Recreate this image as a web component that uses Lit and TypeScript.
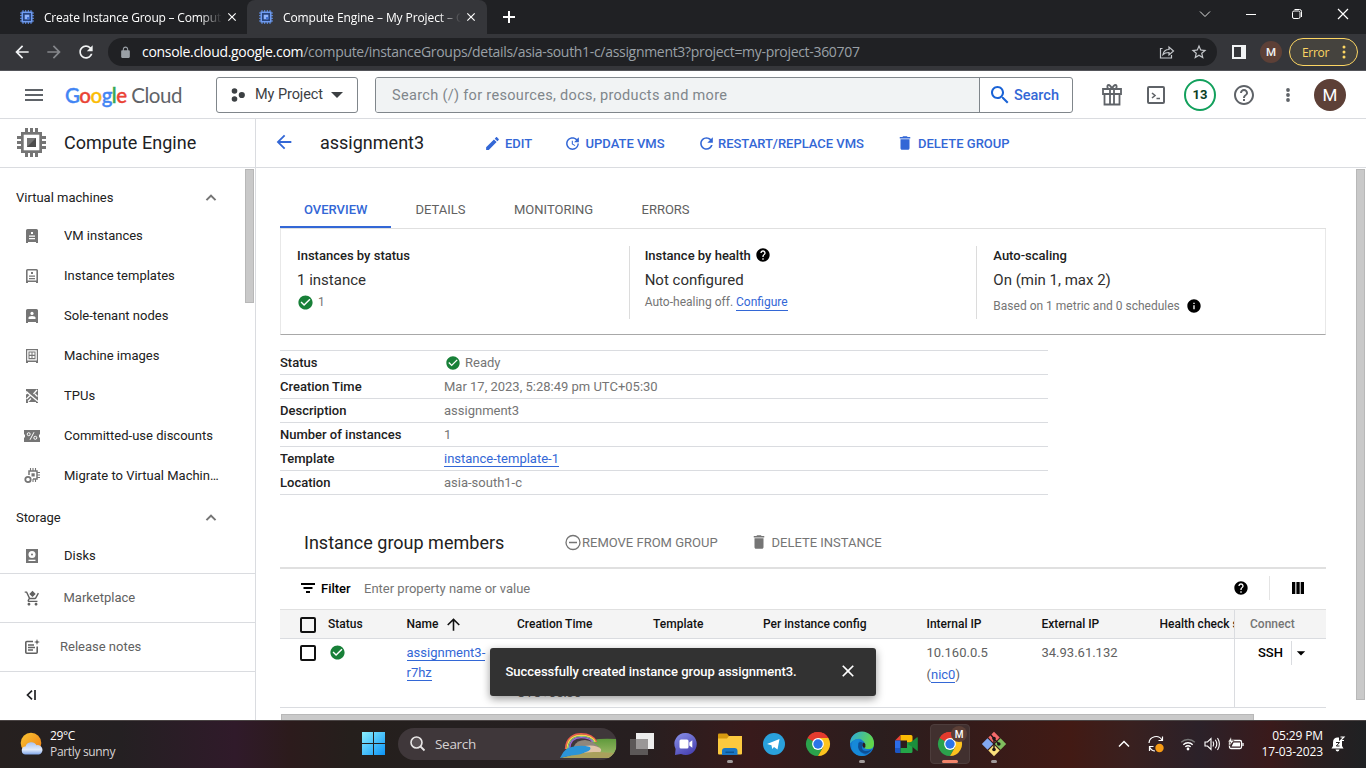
import { LitElement, html, css } from "lit";
import { customElement } from "lit/decorators.js";

const P = {
  edit: "M3 17.25V21h3.75L17.81 9.94l-3.75-3.75L3 17.25zM20.71 7.04c.39-.39.39-1.02 0-1.41l-2.34-2.34c-.39-.39-1.02-.39-1.41 0l-1.83 1.83 3.75 3.75 1.83-1.83z",
  refresh: "M17.65 6.35C16.2 4.9 14.21 4 12 4c-4.42 0-7.99 3.58-7.99 8s3.57 8 7.99 8c3.73 0 6.84-2.55 7.73-6h-2.08c-.82 2.33-3.04 4-5.65 4-3.31 0-6-2.69-6-6s2.69-6 6-6c1.66 0 3.14.69 4.22 1.78L13 11h7V4l-2.35 2.35z",
  update: "M21 10.12h-6.78l2.74-2.82c-2.73-2.7-7.15-2.8-9.88-.1-2.73 2.71-2.73 7.08 0 9.79s7.15 2.71 9.88 0C18.32 15.65 19 14.08 19 12.1h2c0 1.98-.88 4.55-2.64 6.29-3.51 3.48-9.21 3.48-12.72 0-3.5-3.47-3.53-9.11-.02-12.58s9.14-3.47 12.65 0L21 3v7.12zM12.5 8v4.25l3.5 2.08-.72 1.21L11 13V8h1.5z",
  del: "M6 19c0 1.1.9 2 2 2h8c1.1 0 2-.9 2-2V7H6v12zM19 4h-3.5l-1-1h-5l-1 1H5v2h14V4z",
  help: "M12 2C6.48 2 2 6.48 2 12s4.48 10 10 10 10-4.48 10-10S17.52 2 12 2zm1 17h-2v-2h2v2zm2.07-7.75l-.9.92C13.45 12.9 13 13.5 13 15h-2v-.5c0-1.1.45-2.1 1.17-2.83l1.24-1.26c.37-.36.59-.86.59-1.41 0-1.1-.9-2-2-2s-2 .9-2 2H8c0-2.21 1.79-4 4-4s4 1.79 4 4c0 .88-.36 1.68-.93 2.25z",
  helpOutline: "M11 18h2v-2h-2v2zm1-16C6.48 2 2 6.48 2 12s4.48 10 10 10 10-4.48 10-10S17.52 2 12 2zm0 18c-4.41 0-8-3.59-8-8s3.59-8 8-8 8 3.59 8 8-3.59 8-8 8zm0-14c-2.21 0-4 1.79-4 4h2c0-1.1.9-2 2-2s2 .9 2 2c0 2-3 1.75-3 5h2c0-2.25 3-2.5 3-5 0-2.21-1.79-4-4-4z",
  search: "M15.5 14h-.79l-.28-.27C15.41 12.59 16 11.11 16 9.5 16 5.91 13.09 3 9.5 3S3 5.91 3 9.5 5.91 16 9.5 16c1.61 0 3.09-.59 4.23-1.57l.27.28v.79l5 4.99L20.49 19l-4.99-5zm-6 0C7.01 14 5 11.99 5 9.5S7.01 5 9.5 5 14 7.01 14 9.5 11.99 14 9.5 14z",
  check: "M12 2C6.48 2 2 6.48 2 12s4.48 10 10 10 10-4.48 10-10S17.52 2 12 2zm-2 15l-5-5 1.41-1.41L10 14.17l7.59-7.59L19 8l-9 9z",
  info: "M12 2C6.48 2 2 6.48 2 12s4.48 10 10 10 10-4.48 10-10S17.52 2 12 2zm1 15h-2v-6h2v6zm0-8h-2V7h2v2z",
  star: "M22 9.24l-7.19-.62L12 2 9.19 8.63 2 9.24l5.46 4.73L5.82 21 12 17.27 18.18 21l-1.63-7.03L22 9.24zM12 15.4l-3.76 2.27 1-4.28-3.32-2.88 4.38-.38L12 6.1l1.71 4.04 4.38.38-3.32 2.88 1 4.28L12 15.4z",
  lock: "M18 8h-1V6c0-2.76-2.24-5-5-5S7 3.24 7 6v2H6c-1.1 0-2 .9-2 2v10c0 1.1.9 2 2 2h12c1.1 0 2-.9 2-2V10c0-1.1-.9-2-2-2zM9 6c0-1.66 1.34-3 3-3s3 1.34 3 3v2H9z",
  up: "M12 7.500l-6.300 6.200L7.400 15.400 12 10.900l4.600 4.500 1.700-1.700z",
  back: "M20 11H7.83l5.59-5.59L12 4l-8 8 8 8 1.41-1.41L7.83 13H20v-2z",
  forward: "M12 4l-1.41 1.41L16.17 11H4v2h12.17l-5.58 5.59L12 20l8-8z",
  arrowUp: "M4 12l1.41 1.41L11 7.83V20h2V7.83l5.58 5.59L20 12l-8-8-8 8z",
  close: "M19 6.41L17.59 5 12 10.59 6.41 5 5 6.41 10.59 12 5 17.59 6.41 19 12 13.41 17.59 19 19 17.59 13.41 12z",
  drop: "M7 10l5 5 5-5z",
  cart: "M7 18c-1.1 0-1.99.9-1.99 2S5.9 22 7 22s2-.9 2-2-.9-2-2-2zm10 0c-1.1 0-1.99.9-1.99 2s.89 2 1.99 2 2-.9 2-2-.9-2-2-2zm-9.83-3.25l.03-.12.9-1.63h7.45c.75 0 1.41-.41 1.75-1.03l3.86-7.01L19.42 4h-.01l-1.1 2-2.76 5H8.53l-.13-.27L6.16 6l-.95-2-.94-2H1v2h2l3.6 7.59-1.35 2.45c-.16.28-.25.61-.25.96 0 1.1.9 2 2 2h12v-2H7.42c-.13 0-.25-.11-.25-.25zM12 1l4.5 4.5L12 10 7.5 5.5z",
};

const mi = (d: string, size: number, cls = "") =>
  html`<svg class=${cls} width=${size} height=${size} viewBox="0 0 24 24"><path d=${d}></path></svg>`;

const favicon = html`<svg width="16" height="16" viewBox="0 0 16 16">
  <path d="M4 1v14M6.7 1v14M9.3 1v14M12 1v14M1 4h14M1 6.700h14M1 9.300h14M1 12h14" stroke="#5f8fe8" stroke-width="1"></path>
  <rect x="2.500" y="2.500" width="11" height="11" fill="#6f9bf0"></rect>
  <rect x="4" y="4" width="8" height="8" fill="#26437c"></rect>
  <rect x="5.7" y="5.7" width="4.6" height="4.6" fill="#8fb3fa"></rect><path d="M8 8h2.3v2.3H8z" fill="#4172d6"></path></svg>`;

const chip = html`<svg width="29" height="29" viewBox="0 0 29 29">
  <path d="M9.5 0v29M14.5 0v29M19.5 0v29M0 9.5h29M0 14.5h29M0 19.5h29" stroke="#757575" stroke-width="3"></path>
  <rect x="4" y="4" width="21" height="21" fill="#757575"></rect>
  <rect x="6.7" y="6.7" width="15.6" height="15.6" fill="#fff"></rect>
  <rect x="10" y="10" width="9" height="9" fill="#757575"></rect><path d="M19 10v9h-9z" fill="#4d4d4d"></path></svg>`;

const navIcons = {
  vm: html`<svg width="16" height="16" viewBox="0 0 16 16"><path d="M2 2.5Q2 1 3.5 1h9Q14 1 14 2.5V15h-2v-1H4v1H2zM7 4v2h2V4zM5 7.5v1.2h6V7.5zM5 10v1.2h6V10z" fill-rule="evenodd"></path></svg>`,
  tpl: html`<svg width="16" height="16" viewBox="0 0 16 16"><path d="M2 2.5Q2 1 3.5 1h9Q14 1 14 2.5V15h-2v-1H4v1H2zM3.6 2.6v9.8h8.8V2.6zM7 4h2v2H7zM5 7.5h6v1.2H5zM5 10h6v1.2H5z" fill-rule="evenodd"></path></svg>`,
  sole: html`<svg width="16" height="16" viewBox="0 0 16 16"><path d="M2 2.5Q2 1 3.5 1h9Q14 1 14 2.5V15h-2v-1H4v1H2z"></path><circle cx="8" cy="5.4" r="1.6" fill="#fff"></circle><path d="M4.5 11V9.8Q4.5 8 8 8t3.5 1.8V11z" fill="#fff"></path></svg>`,
  img: html`<svg width="16" height="16" viewBox="0 0 16 16"><path d="M2 1h12v14h-2v-1H4v1H2zM3.2 2.3v10.2h9.6V2.3zM4.5 3.5h7v7.8h-7zM5.5 4.6v2.2h2V4.6zm3 0v2.2h2V4.6zm-3 3.3v2.2h2V7.9zm3 0v2.2h2V7.9z" fill-rule="evenodd"></path></svg>`,
  tpu: html`<svg width="16" height="16" viewBox="0 0 16 16"><path d="M2 1h12v14h-2v-1H4v1H2z"></path><path d="M2 3.5l12 10M13 2L9.5 6M2.5 11l4-4M4 13.5l3-3M2 6l2-2M11 6l2.5 2.5" stroke="#fff" stroke-width="1.3"></path></svg>`,
  disc: html`<svg width="16" height="16" viewBox="0 0 16 16"><path d="M0 2h16v4.5h-1v3h1V14H0V9.500h1v-3H0z"></path><path d="M10 4.2L6 11.8" stroke="#fff" stroke-width="1"></path><circle cx="4.7" cy="6.2" r="1.5" fill="none" stroke="#fff"></circle><circle cx="11.3" cy="9.8" r="1.5" fill="none" stroke="#fff"></circle></svg>`,
  mig: html`<svg width="16" height="16" viewBox="0 0 16 16"><path d="M6.5 0v3M9 0v3M11.5 0v3M13 4.5h3M13 7h3M13 9.5h3M9 11v3M11.5 11v3" stroke="#757575" stroke-width="1.1"></path><path d="M5 7V3h8v8h-4" fill="none" stroke="#757575" stroke-width="1.5"></path><rect x="7.5" y="5.3" width="3.2" height="3.2"></rect><circle cx="4" cy="11.5" r="2.7" fill="none" stroke="#757575" stroke-width="1.8"></circle></svg>`,
  disk: html`<svg width="16" height="16" viewBox="0 0 16 16"><path d="M2 1h12v14H2z"></path><circle cx="8" cy="6.6" r="3.5" fill="#fff"></circle><circle cx="8" cy="6.6" r="1"></circle><path d="M4.5 11.7h7v1.3h-7z" fill="#fff"></path></svg>`,
  notes: html`<svg width="16" height="16" viewBox="0 0 16 16"><path d="M9 2.5H2.8Q1.8 2.5 1.8 3.5v9.7q0 1 1 1h9.4q1 0 1-1V7.5" fill="none" stroke="#616161" stroke-width="1.6"></path><path d="M4 6h6M4 8.5h7M4 11h5" stroke="#616161" stroke-width="1.4"></path><path d="M13 0l.8 2.2L16 3l-2.2.8L13 6l-.8-2.2L10 3l2.2-.8z" fill="#616161"></path></svg>`,
};

const weather = html`<svg width="24" height="24" viewBox="0 0 24 24"><defs><linearGradient id="sun" x2="1" y2="1"><stop stop-color="#f9c532"></stop><stop offset="1" stop-color="#ee7d16"></stop></linearGradient><linearGradient id="cl" x2="0" y2="1"><stop stop-color="#a9c3f2"></stop><stop offset=".6" stop-color="#e1ebfb"></stop><stop offset="1" stop-color="#7fa5e8"></stop></linearGradient></defs>
  <circle cx="11" cy="11" r="10.3" fill="url(#sun)"></circle><path d="M6 22.5a4 4 0 0 1-.5-8 6 6 0 0 1 11-1.2 4.7 4.7 0 0 1 2.5 9.2z" fill="url(#cl)"></path></svg>`;
const winLogo = html`<svg width="23" height="23" viewBox="0 0 23 23"><defs><linearGradient id="wn" x2="1" y2="1"><stop stop-color="#8af0ff"></stop><stop offset="1" stop-color="#0c93f5"></stop></linearGradient></defs><path d="M0 0h11v11H0zM12 0h11v11H12zM0 12h11v11H0zM12 12h11v11H12z" fill="url(#wn)"></path></svg>`;
const rainbow = html`<svg class="scene" width="56" height="25" viewBox="0 0 56 25"><defs><linearGradient id="gr" x2="0" y2="1"><stop stop-color="#5f9a3c"></stop><stop offset="1" stop-color="#a6bd6c"></stop></linearGradient></defs>
  <path d="M32 7q10-2 24-1v10q-2 6-7 9H22l6-12z" fill="url(#gr)"></path><path d="M14 13q3-6 11-6 8 1 14 7l-3 4H15z" fill="#8f877c"></path>
  <path d="M5.500 16C6 4.500 14 .800 21 .800S34 3.500 36.500 9" fill="none" stroke="#ee5a4f" stroke-width="1.400"></path><path d="M6.900 16C7.400 5.500 14.500 2.200 21 2.200S33 4.500 35.200 9" fill="none" stroke="#fbd44b" stroke-width="1.400"></path><path d="M8.200 16C8.700 6.500 15 3.500 21 3.500S32 5.500 34 9" fill="none" stroke="#7bc98a" stroke-width="1.200"></path><path d="M9.500 16C10 7.500 15.500 4.700 21 4.700S31 6.500 32.700 9" fill="none" stroke="#9a62d8" stroke-width="1.300"></path>
  <path d="M24 13q12-2 17 3 1 4-5 5l-12-1z" fill="#e0c4a8"></path><path d="M0 25q22-7 38-6l16 1-5 5z" fill="#a9a05c"></path><path d="M0 25q4-8 8-10 12-4 22-1 2 3-4 5-6 3-15 3.500z" fill="#2b95d8"></path></svg>`;
const taskView = html`<svg width="24" height="22" viewBox="0 0 24 22"><rect x="6" width="18" height="16" fill="#ededed"></rect><rect y="6" width="18" height="16" fill="#5c5858"></rect><path d="M6 6h12v10H6z" fill="#9a9797"></path></svg>`;
const chat = html`<svg width="24" height="24" viewBox="0 0 24 24"><defs><linearGradient id="ch" x2="0.6" y2="1"><stop stop-color="#8b93ea"></stop><stop offset="1" stop-color="#4b45b4"></stop></linearGradient></defs><path d="M12 1a11 11 0 1 1-5 20.9L1 23l.6-6A11 11 0 0 1 12 1z" fill="url(#ch)"></path><rect x="5.5" y="7.5" width="9" height="9" rx="1.5" fill="#fff"></rect><path d="M15.3 10.5l3-2.3v7.6l-3-2.3z" fill="#fff"></path></svg>`;
const folder = html`<svg width="24" height="22" viewBox="0 0 24 22"><path d="M0 1.5Q0 .5 1 .5h8l2 2.5v6H0z" fill="#d79a10"></path><path d="M0 5.5h9l2-2.5h13v17.5q0 1-1 1H1q-1 0-1-1z" fill="#fcc93f"></path><path d="M4 22v-4q0-3 3-3h9.5q3 0 3 3v4z" fill="#1a76c4"></path><path d="M7.5 18.5h8.5v1.5H7.5z" fill="#0d5390"></path></svg>`;
const telegram = html`<svg width="22" height="22" viewBox="0 0 22 22"><circle cx="11" cy="11" r="11" fill="#2aa1dc"></circle><path d="M4 11L16.5 6 14.5 16.5 11 14l-1.8 2-.7-3.7z" fill="#fff"></path></svg>`;
const chromeIcon = html`<svg width="24" height="24" viewBox="0 0 24 24"><path d="M12 12L1.6 6A12 12 0 0 1 22.4 6z" fill="#e33b2e"></path><path d="M1.6 6A12 12 0 0 0 12 24l5.2-9L12 12z" fill="#2ba24c"></path><path d="M22.4 6A12 12 0 0 1 12 24l5.2-9L12 6z" fill="#fcc31e"></path><path d="M1.6 6L6.8 15l5.2-3z" fill="#2ba24c"></path><path d="M12 6h10.4L17 12z" fill="#fcc31e"></path><path d="M1.6 6A12 12 0 0 1 22.4 6.1H12a6 6 0 0 0-5.2 3z" fill="#e33b2e"></path><circle cx="12" cy="12" r="5.9" fill="#fff"></circle><circle cx="12" cy="12" r="4.7" fill="#2b74e8"></circle></svg>`;
const edge = html`<svg width="24" height="24" viewBox="0 0 24 24"><defs><linearGradient id="eg" x2="1" y2=".3"><stop stop-color="#2aa7e4"></stop><stop offset="1" stop-color="#62d64a"></stop></linearGradient></defs><circle cx="12" cy="12" r="12" fill="#1479d0"></circle><path d="M0 11.5A12 12 0 0 1 24 11.5q0 5.5-5 5.5-4.5 0-5-1.5 2-2 .5-5Q11 5.5 5.5 7.5 1.5 9 0 11.5z" fill="url(#eg)"></path><path d="M8 12.5q0-4 4-5.3-6-1.5-9.5 2.5Q-1 20 9 23.6q3.5 1 7-.4-8-2-8-10.7z" fill="#1689d8"></path><path d="M8.5 11q-2 8 5.5 10.5 4 1 8-4-10 4-10-2.5 0-2.5 1-4-2.5-2-4.5 0z" fill="#0c4f96"></path><path d="M13.500 10.500q-2.500 3 .5 5.500l1.500-1q-.5-.8 0-2 0-2-2-2.500z" fill="#2c1c1f"></path></svg>`;
const meet = html`<svg width="23" height="18" viewBox="0 0 23 18"><path d="M5.5 0v5.5H0z" fill="#ea4335"></path><path d="M0 5.5h5.5v7.5H0z" fill="#2b6de8"></path><path d="M0 13h5.5v5H1.5Q0 18 0 16.5z" fill="#1b56c4"></path><path d="M5.5 0H16q1.5 0 1.5 1.5v6H12v-2H5.5z" fill="#fbbc04"></path><path d="M5.5 13H12v-5.5h5.5v9q0 1.5-1.5 1.5H5.5z" fill="#24a648"></path><path d="M17.5 6L22 2.3q.8-.5.8.5v12.5q0 1-.8.5L17.5 12 12.5 9z" fill="#1a8f3c"></path></svg>`;
const git = html`<svg width="26" height="26" viewBox="0 0 26 26"><path d="M13 .8l5.7 5.7-5.7 5.7-5.7-5.7z" fill="#f46a6a"></path><path d="M6.5 7.3l5.7 5.7-5.7 5.7L.8 13z" fill="#82a8f2"></path><path d="M19.5 7.3l5.7 5.7-5.7 5.7-5.7-5.7z" fill="#7fbf5e"></path><path d="M13 13.8l5.7 5.7-5.7 5.7-5.7-5.7z" fill="#fbe07c"></path><path d="M9.5 3.5L13 7.5v11M13 8l5 5" fill="none" stroke="#1d1517" stroke-width="1.4"></path><circle cx="13" cy="7.5" r="1.8" fill="#1d1517"></circle><circle cx="17.8" cy="13" r="1.8" fill="#1d1517"></circle><circle cx="13" cy="18.5" r="1.8" fill="#1d1517"></circle></svg>`;

@customElement("app-root")
export class AppRoot extends LitElement {
  static styles = css`
    :host { display: flex; flex-direction: column; position: relative; width: 1366px; height: 768px; overflow: hidden; background: #fff; font-family: Roboto, "Liberation Sans", sans-serif; font-size: 13px; color: #212121; }
    * { box-sizing: border-box; }
    svg { display: block; fill: currentColor; flex: none; overflow: visible; }
    span { white-space: nowrap; }
    .chrome { font-family: "Open Sans", "Noto Sans", sans-serif; }

    .tabs { display: flex; height: 34px; background: #202124; color: #fff; }
    .btab { display: flex; align-items: center; width: 240px; height: 34px; padding-left: 11px; font-size: 12px; }
    .btab.first { width: 247px; padding-left: 19px; }
    .btab.on { background: #35363a; border-radius: 8px 8px 0 0; }
    .btitle { width: 178px; margin-left: 9px; overflow: hidden; letter-spacing: -0.2px; mask-image: linear-gradient(90deg, #000 156px, transparent 178px); }
    .on .btitle { letter-spacing: -0.1px; margin-left: 9px; }
    .bclose { margin-left: 3px; }
    .plus { margin: 9px 0 0 14px; }
    .winctl { display: flex; margin-left: auto; height: 28px; }
    .winctl div { width: 46px; display: flex; align-items: center; justify-content: center; }
    .tool { display: flex; align-items: center; height: 36px; background: #35363a; color: #f1f3f4; padding-left: 6px; }
    .tool .b { width: 32px; display: flex; justify-content: center; }
    .dim { color: #85878b; }
    .omni { display: flex; align-items: center; width: 1109px; height: 28px; margin-left: 6px; border-radius: 14px; background: #202124; padding: 0 2px 0 11px; }
    .omni .lock { color: #9aa0a6; }
    .url { margin-left: 10px; font-size: 14px; color: #9aa0a6; flex: 1; letter-spacing: -0.31px; padding-bottom: 2px; }
    .url b { font-weight: 400; color: #fff; }
    .omni .b { color: #c4c7cb; }
    .pav { width: 22px; height: 22px; border-radius: 50%; background: #5d4037; font: 500 11.5px Roboto; display: flex; align-items: center; justify-content: center; }
    .err { display: flex; align-items: center; width: 69px; height: 28px; border-radius: 14px; border: 1px solid #fdd663; background: #45433e; color: #fdd663; margin-left: 7px; padding-left: 12px; font-size: 12px; }
    .err span { width: 40px; letter-spacing: -0.3px; }
    .line { height: 1px; background: #54555a; }

    .head { display: flex; align-items: center; height: 48px; border-bottom: 1px solid #dadce0; }
    .menu { margin-left: 25px; color: #5f6368; }
    .logo { width: 129px; margin-left: 22px; font-family: Lato, sans-serif; font-size: 20.5px; color: #5f6368; letter-spacing: -0.5px; }
    .g1 { color: #4285f4; } .g2 { color: #ea4335; } .g3 { color: #fbbc04; } .g4 { color: #34a853; }
    .logo span { font-weight: 500; -webkit-text-stroke: .4px currentColor; }
    .proj { display: flex; align-items: center; width: 142px; height: 36px; border: 1px solid #80868b; border-radius: 3px; margin-left: 22px; padding-left: 14px; font-size: 14.5px; color: #3c4043; }
    .proj span { width: 76px; margin-left: 10px; letter-spacing: -.08px; }
    .sbox { display: flex; width: 698px; height: 36px; margin-left: 17px; border: 1px solid #80868b; border-radius: 3px; overflow: hidden; font-size: 14.5px; }
    .sin { width: 603px; background: #f1f3f4; color: #80868b; display: flex; align-items: center; padding: 1px 0 0 16px; letter-spacing: .32px; }
    .sbtn { width: 93px; border-left: 1px solid #80868b; display: flex; align-items: center; padding-left: 8px; color: #1a63d6; font-weight: 500; }
    .sbtn span { margin: 1px 0 0 2px; color: #3367d6; }
    .hicons { display: flex; margin-left: 17px; color: #5f6368; }
    .hicons div { width: 44px; display: flex; align-items: center; justify-content: center; }
    .hicons .notif { width: 32px; height: 32px; margin: 0 6px; border: 2px solid #12a05c; border-radius: 50%; color: #0b3d24; font-weight: 700; font-size: 13px; }
    .hav { width: 32px; height: 32px; border-radius: 50%; background: #5d4037; color: #fff; font-size: 17px; display: flex; align-items: center; justify-content: center; margin-left: 4px; }

    .page { display: flex; height: 601px; }
    .side { width: 256px; border-right: 1px solid #dadce0; display: flex; flex-direction: column; }
    .prod { display: flex; align-items: center; height: 49px; border-bottom: 1px solid #dadce0; padding: 0 0 2px 17px; font-size: 18px; color: #202124; }
    .prod span { margin-left: 18px; letter-spacing: .03px; }
    .scroll { display: flex; height: 405px; overflow: hidden; }
    .nav { width: 245px; padding-top: 8px; color: #212121; }
    .sec { display: flex; align-items: center; justify-content: space-between; height: 36px; margin-top: 4px; padding: 0 24px 0 16px; }
    .sec svg { color: #757575; }
    .sec span, .it span, .foot span { padding-bottom: 2px; }
    .it { display: flex; align-items: center; height: 40px; padding-left: 24px; }
    .it svg { color: #757575; }
    .it span { margin-left: 24px; width: 156px; overflow: hidden; text-overflow: ellipsis; }
    .thumb1 { width: 9px; height: 134px; margin-top: 1px; background: #c9c9c9; border: 1px solid #b8b8b8; }
    .foot { display: flex; align-items: center; height: 49px; border-top: 1px solid #dadce0; padding-left: 24px; color: #616161; }
    .foot span { margin-left: 22.5px; }
    .foot .rn { margin-left: 20px; }
    .foot.last { color: #202124; padding: 0 0 3px 26px; }

    .main { width: 1110px; display: flex; flex-direction: column; }
    .bar { display: flex; align-items: center; height: 49px; border-bottom: 1px solid #dadce0; color: #3367d6; padding: 0 0 2px 17px; flex: none; }
    .ttl { width: 165px; margin-left: 25px; font-size: 18px; color: #202124; }
    .act { display: flex; align-items: center; font-weight: 500; padding-top: 2px; }
    .act svg { margin-right: 4px; margin-left: -1px; }
    .a1 { width: 80px; } .a2 { width: 133px; } .a3 { width: 199px; }
    .a2 span { margin-left: .5px; }
    .a3 svg { margin-right: 2px; }
    .a3 span { letter-spacing: -.02px; }
    .body { display: flex; height: 552px; overflow: hidden; }
    .col { width: 1046px; margin-left: 24px; overflow: hidden; }
    .vsb { width: 9px; height: 531px; margin: 1px 0 0 30px; background: #c9c9c9; border: 1px solid #b8b8b8; }
    .ntabs { display: flex; height: 61px; padding-top: 24px; border-bottom: 1px solid #e0e0e0; color: #616161; }
    .ntab { height: 36px; padding: 0 0 2px 24.5px; display: flex; align-items: center; }
    .ntab.on { color: #3367d6; font-weight: 500; border-bottom: 2px solid #3367d6; padding: 0 0 0 24px; }
    .n1 { width: 111px; } .n2 { width: 98.5px; } .n3 { width: 127.5px; }
    .cards { display: flex; height: 106px; border: 1px solid #e8e8e8; border-top: 0; border-bottom: 1px solid #a8a8a8; padding-top: 17px; }
    .card { width: 348px; height: 73px; padding-left: 15px; border-right: 1px solid #dcdcdc; }
    .card.c1 { width: 349px; padding-left: 16px; }
    .card.c3 { border-right: 0; padding-left: 16px; }
    .ct { display: flex; align-items: center; height: 18px; font-weight: 500; gap: 4px; }
    .cv { display: flex; align-items: center; height: 32px; font-size: 15px; color: #2f2f2f; }
    .cs { display: flex; align-items: center; height: 12px; font-size: 12px; color: #757575; }
    .c3 .cs { height: 20px; }
    .cs span + svg { margin-left: 6px; color: #000; }
    .cs .ok { margin: 0 4px 0 0; }
    .ok { color: #188038; }
    .blk { color: #000; }
    .lnk { color: #3367d6; border-bottom: 1px solid #3367d6; }
    .cs .lnk { margin: 1px 0 0 3px; line-height: 15px; }
    .facts { width: 768px; margin-top: 15px; border-top: 1px solid #dadce0; }
    .fact { display: flex; align-items: center; height: 24px; border-bottom: 1px solid #dadce0; color: #757575; }
    .fact .k { width: 164px; color: #212121; font-weight: 500; }
    .fact .ok { margin: 0 4px 0 1px; }
    .fact .lnk { line-height: 15px; margin-top: 1px; }
    .gm { display: flex; align-items: center; height: 72px; padding: 22px 0 0 24px; color: #757575; }
    .gm .h { width: 261px; font-size: 18px; color: #212121; letter-spacing: .01px; }
    .gm .r { width: 168px; }
    .gm .d { margin-left: 3.5px; }
    .filter { display: flex; align-items: center; height: 43px; border-top: 2px solid #e0e0e0; border-bottom: 1px solid #e0e0e0; padding: 0 0 2px 21px; }
    .filter .f { width: 43px; margin-left: 6px; font-weight: 500; color: #000; }
    .filter .ph { width: 869px; color: #757575; }
    .filter .sep { height: 24px; width: 1px; background: #e4e4e4; margin: 0 22px 0 20px; }
    .thead, .trow { display: flex; }
    .thead { height: 29px; background: #f4f4f4; border-bottom: 1px solid #dadce0; color: #111; font-size: 12px; font-weight: 500; align-items: center; }
    .trow { height: 69px; border-bottom: 1px solid #dadce0; color: #616161; line-height: 20px; }
    .c { flex: none; }
    .k0 { width: 48px; padding-left: 20px; } .k1 { width: 78.5px; } .k2 { width: 110.5px; display: flex; align-items: center; } .k3 { width: 136px; } .k4 { width: 110px; } .k5 { width: 163.5px; } .k6 { width: 115px; } .k7 { width: 118px; } .k8 { width: 74.5px; overflow: hidden; } .k9 { width: 92px; height: 100%; border-left: 1px solid #dadce0; padding-left: 15px; display: flex; align-items: center; color: #757575; }
    .k2 svg { margin-left: 6px; }
    .thead .box { margin-top: 1px; }
    .trow .c { padding-top: 4px; }
    .trow .k2 { display: block; }
    .trow .k9 { padding: 2px 0 0 23px; align-items: flex-start; }
    .trow .k9 svg { margin: 2px 0 0 -1px; }
    .trow .k0 { padding-top: 6px; }
    .trow .k1 { padding: 5px 0 0 .5px; }
    .box { width: 16px; height: 16px; border: 2px solid #111; border-radius: 2px; }
    .ssh { width: 34px; height: 24px; border-right: 1px solid #dadce0; color: #000; font-weight: 500; line-height: 24px; }
    .trow .l { line-height: 14px; display: inline-block; }
    .nic { display: block; margin-top: 2px; }
    .hsb { width: 973px; height: 8px; margin: 6px 0 0 1px; background: #c9c9c9; border: 1px solid #b8b8b8; }

    .snack { position: absolute; left: 490px; top: 648px; width: 386px; height: 48px; border-radius: 3px; background: #323232; color: #fff; display: flex; align-items: center; padding: 0 0 2px 15.5px; font-weight: 500; box-shadow: 0 3px 8px rgba(0,0,0,.4); }
    .snack span { width: 332.5px; letter-spacing: -.04px; }

    .task { display: flex; align-items: center; height: 48px; border-top: 1px solid #4a4444; padding-bottom: 2px; color: #fff; background: linear-gradient(90deg, #26201f 0, #242022 120px, #301a2a 235px, #2c1b1c 290px, #251f1c 350px, #252020 450px, #271f20 640px, #381a1b 750px, #2b1e1e 880px, #331b1a 960px, #421a14 1070px, #39201f 1130px, #2b2129 1200px, #3a1a1b 1270px, #2b1e1f 1310px, #1f2123 1366px); }
    .w { display: flex; align-items: center; width: 362px; padding-left: 20px; font-size: 12px; line-height: 16px; }
    .w div { margin-left: 6px; display: flex; flex-direction: column; color: #d8d4d4; letter-spacing: -.33px; }
    .w div span:first-child { color: #fff; }
    .pill { display: flex; align-items: center; width: 219px; height: 32px; margin-left: 13px; border-radius: 16px; background: #3f373a; padding-left: 12px; color: #d6d2d2; overflow: hidden; }
    .pill span { width: 125px; margin-left: 9px; font-size: 13.5px; letter-spacing: -.3px; }
    .scene { margin-top: 4px; }
    .apps { display: flex; margin-left: 3px; }
    .app { width: 44px; height: 47px; position: relative; display: flex; align-items: center; justify-content: center; }
    .cur { width: 40px; height: 40px; border-radius: 4px; background: #41302f; border: 1px solid #4d3d3c; display: flex; align-items: center; justify-content: center; }
    .dot { position: absolute; left: 19px; bottom: 4px; width: 6px; height: 3px; border-radius: 2px; background: #a09a9a; }
    .dot.wide { left: 14px; width: 16px; background: #f2846a; }
    .badge { position: absolute; right: 5px; top: 6px; width: 16px; height: 16px; border-radius: 50%; background: #5d4037; font: 500 10px Roboto; display: flex; align-items: center; justify-content: center; }
    .tray { display: flex; align-items: center; margin-left: auto; }
    .t1 { width: 24px; } .t2 { width: 40px; } .t3 { width: 24px; } .t4 { width: 24px; } .t5 { width: 24px; margin-right: 5px; }
    .clock { width: 70px; display: flex; flex-direction: column; align-items: flex-end; font-size: 12px; line-height: 16px; letter-spacing: -.12px; }
    .bell { margin: 0 21px 0 8px; }
  `;

  private item(icon: unknown, label: string) {
    return html`<div class="it">${icon}<span>${label}</span></div>`;
  }

  private fact(k: string, v: unknown) {
    return html`<div class="fact"><span class="k">${k}</span>${v}</div>`;
  }

  render() {
    return html`
      <div class="tabs chrome">
        <div class="btab first">${favicon}<span class="btitle">Create Instance Group – Compute Engine</span>${mi(P.close, 14, "bclose")}</div>
        <div class="btab on">${favicon}<span class="btitle">Compute Engine – My Project – Google</span>${mi(P.close, 14, "bclose")}</div>
        <svg class="plus" width="16" height="16" viewBox="0 0 16 16"><path d="M8 2v12M2 8h12" stroke="#fff" stroke-width="2"></path></svg>
        <div class="winctl">
          <div><svg width="12" height="12" viewBox="0 0 12 12"><path d="M1 3.5l5 5 5-5" fill="none" stroke="#ddd"></path></svg></div>
          <div><svg width="10" height="10" viewBox="0 0 10 10"><path d="M0 5.5h10" stroke="#fff"></path></svg></div>
          <div><svg width="10" height="10" viewBox="0 0 10 10"><rect x=".5" y="2" width="7.5" height="7.5" rx="1.5" fill="none" stroke="#fff"></rect><path d="M2.5 .5H7.5q2 0 2 2V8" fill="none" stroke="#fff"></path></svg></div>
          <div><svg width="10" height="10" viewBox="0 0 10 10"><path d="M0 0l10 10M10 0L0 10" stroke="#fff" stroke-width="1.2"></path></svg></div>
        </div>
      </div>
      <div class="tool chrome">
        <div class="b">${mi(P.back, 20)}</div><div class="b dim">${mi(P.forward, 20)}</div><div class="b">${mi(P.refresh, 20)}</div>
        <div class="omni">${mi(P.lock, 13, "lock")}<span class="url"><b>console.cloud.google.com</b>/compute/instanceGroups/details/asia-south1-c/assignment3?project=my-project-360707</span>
          <div class="b"><svg width="16" height="16" viewBox="0 0 16 16"><path d="M3.5 4.5H1.5v9.5h11V11M4 10.5q1-5 6-5V3l4.5 4-4.5 4V8.5q-4 0-6 2z" fill="none" stroke="#c4c7cb" stroke-width="1.2"></path></svg></div>
          <div class="b">${mi(P.star, 18)}</div>
        </div>
        <svg width="43" height="14" viewBox="0 0 43 14"><path d="M15 0h14v14H15zM17 2v10h7V2z" fill-rule="evenodd"></path></svg>
        <div class="pav">M</div>
        <div class="err"><span>Error</span><svg width="4" height="14" viewBox="0 0 4 14"><circle cx="2" cy="2" r="1.5"></circle><circle cx="2" cy="7" r="1.5"></circle><circle cx="2" cy="12" r="1.5"></circle></svg></div>
      </div>
      <div class="line"></div>
      <div class="head">
        <svg class="menu" width="18" height="12" viewBox="0 0 18 12"><path d="M0 0h18v2H0zM0 5h18v2H0zM0 10h18v2H0z"></path></svg>
        <span class="logo"><span class="g1">G</span><span class="g2">o</span><span class="g3">o</span><span class="g1">g</span><span class="g4">l</span><span class="g2">e</span> Cloud</span>
        <div class="proj"><svg width="14" height="14" viewBox="0 0 14 14"><circle cx="3.5" cy="3" r="2.8"></circle><circle cx="10.8" cy="7" r="3.1"></circle><circle cx="3.5" cy="11" r="2.8"></circle></svg><span>My Project</span><svg width="12" height="6" viewBox="0 0 12 6"><path d="M0 0h12L6 6z"></path></svg></div>
        <div class="sbox"><div class="sin"><span>Search (/) for resources, docs, products and more</span></div><div class="sbtn">${mi(P.search, 24)}<span>Search</span></div></div>
        <div class="hicons">
          <div><svg width="20" height="22" viewBox="0 0 20 22"><path d="M1 5h18v5H1zM2.5 10v10.5h15V10M8 5v15.5M12 5v15.5M10 5Q8.5 1 6.5 1T6 5M10 5q1.5-4 3.5-4T14 5" fill="none" stroke="#5f6368" stroke-width="1.8"></path></svg></div>
          <div><svg width="18" height="18" viewBox="0 0 18 18"><rect x="1" y="1" width="16" height="16" rx="1" fill="none" stroke="#5f6368" stroke-width="2"></rect><path d="M5 7l3 2.5-3 2.5M9.5 12.5H13" fill="none" stroke="#5f6368" stroke-width="1.6"></path></svg></div>
          <div class="notif">13</div>
          <div>${mi(P.helpOutline, 24)}</div>
          <div><svg width="4" height="14" viewBox="0 0 4 14"><circle cx="2" cy="2" r="1.9"></circle><circle cx="2" cy="7" r="1.9"></circle><circle cx="2" cy="12" r="1.9"></circle></svg></div>
        </div>
        <div class="hav">M</div>
      </div>
      <div class="page">
        <div class="side">
          <div class="prod">${chip}<span>Compute Engine</span></div>
          <div class="scroll">
            <div class="nav">
              <div class="sec"><span>Virtual machines</span>${mi(P.up, 20)}</div>
              ${this.item(navIcons.vm, "VM instances")}
              ${this.item(navIcons.tpl, "Instance templates")}
              ${this.item(navIcons.sole, "Sole-tenant nodes")}
              ${this.item(navIcons.img, "Machine images")}
              ${this.item(navIcons.tpu, "TPUs")}
              ${this.item(navIcons.disc, "Committed-use discounts")}
              ${this.item(navIcons.mig, "Migrate to Virtual Machines")}
              <div class="sec"><span>Storage</span>${mi(P.up, 20)}</div>
              ${this.item(navIcons.disk, "Disks")}
            </div>
            <div class="thumb1"></div>
          </div>
          <div class="foot">${mi(P.cart, 17)}<span>Marketplace</span></div>
          <div class="foot">${navIcons.notes}<span class="rn">Release notes</span></div>
          <div class="foot last"><svg width="10" height="10" viewBox="0 0 10 10"><path d="M6 .7L1.5 5 6 9.3M9 0v10" fill="none" stroke="#202124" stroke-width="1.7"></path></svg></div>
        </div>
        <div class="main">
          <div class="bar">
            ${mi(P.back, 22)}<span class="ttl">assignment3</span>
            <div class="act a1">${mi(P.edit, 17)}<span>EDIT</span></div>
            <div class="act a2">${mi(P.update, 17)}<span>UPDATE VMS</span></div>
            <div class="act a3">${mi(P.refresh, 19)}<span>RESTART/REPLACE VMS</span></div>
            <div class="act">${mi(P.del, 18)}<span>DELETE GROUP</span></div>
          </div>
          <div class="body">
            <div class="col">
              <div class="ntabs"><div class="ntab on n1"><span>OVERVIEW</span></div><div class="ntab n2"><span>DETAILS</span></div><div class="ntab n3"><span>MONITORING</span></div><div class="ntab"><span>ERRORS</span></div></div>
              <div class="cards">
                <div class="card c1"><div class="ct"><span>Instances by status</span></div><div class="cv"><span>1 instance</span></div><div class="cs">${mi(P.check, 17, "ok")}<span>1</span></div></div>
                <div class="card"><div class="ct"><span>Instance by health</span>${mi(P.help, 16, "blk")}</div><div class="cv"><span>Not configured</span></div><div class="cs"><span>Auto-healing off.</span><span class="lnk">Configure</span></div></div>
                <div class="card c3"><div class="ct"><span>Auto-scaling</span></div><div class="cv"><span>On (min 1, max 2)</span></div><div class="cs"><span>Based on 1 metric and 0 schedules</span>${mi(P.info, 16)}</div></div>
              </div>
              <div class="facts">
                ${this.fact("Status", html`${mi(P.check, 16, "ok")}<span>Ready</span>`)}
                ${this.fact("Creation Time", html`<span>Mar 17, 2023, 5:28:49 pm UTC+05:30</span>`)}
                ${this.fact("Description", html`<span>assignment3</span>`)}
                ${this.fact("Number of instances", html`<span>1</span>`)}
                ${this.fact("Template", html`<span class="lnk">instance-template-1</span>`)}
                ${this.fact("Location", html`<span>asia-south1-c</span>`)}
              </div>
              <div class="gm"><span class="h">Instance group members</span><svg width="17" height="17" viewBox="0 0 17 17"><circle cx="8" cy="8.5" r="7" fill="none" stroke="#757575" stroke-width="1.3"></circle><path d="M4 8.5h8" stroke="#757575" stroke-width="1.5"></path></svg><span class="r">REMOVE FROM GROUP</span>${mi(P.del, 18)}<span class="d">DELETE INSTANCE</span></div>
              <div class="filter"><svg width="14" height="10" viewBox="0 0 14 10"><path d="M0 0h14v2H0zM2.5 4h9v2h-9zM5 8h4v2H5z" fill="#000"></path></svg><span class="f">Filter</span><span class="ph">Enter property name or value</span>${mi(P.help, 16, "blk")}<div class="sep"></div><svg width="12" height="12" viewBox="0 0 12 12"><path d="M0 0h3.3v12H0zM4.4 0h3.3v12H4.4zM8.7 0H12v12H8.7z" fill="#000"></path></svg></div>
              <div class="thead">
                <div class="c k0"><div class="box"></div></div><div class="c k1"><span>Status</span></div><div class="c k2"><span>Name</span>${mi(P.arrowUp, 19)}</div><div class="c k3"><span>Creation Time</span></div><div class="c k4"><span>Template</span></div><div class="c k5"><span>Per instance config</span></div><div class="c k6"><span>Internal IP</span></div><div class="c k7"><span>External IP</span></div><div class="c k8"><span>Health check status</span></div><div class="k9"><span>Connect</span></div>
              </div>
              <div class="trow">
                <div class="c k0"><div class="box"></div></div><div class="c k1">${mi(P.check, 17, "ok")}</div>
                <div class="c k2"><span class="lnk l">assignment3-</span><br><span class="lnk l">r7hz</span></div>
                <div class="c k3"><span>Mar 17, 2023,</span><br><span>5:28:49 pm</span><br><span>UTC+05:30</span></div>
                <div class="c k4"><span class="lnk l">instance-</span><br><span class="lnk l">template-1</span></div><div class="c k5"></div>
                <div class="c k6"><span>10.160.0.5</span><span class="nic">(<span class="lnk l">nic0</span>)</span></div><div class="c k7"><span>34.93.61.132</span></div><div class="c k8"></div>
                <div class="k9"><div class="ssh"><span>SSH</span></div>${mi(P.drop, 20, "blk")}</div>
              </div>
              <div class="hsb"></div>
            </div>
            <div class="vsb"></div>
          </div>
        </div>
      </div>
      <div class="snack"><span>Successfully created instance group assignment3.</span>${mi(P.close, 20)}</div>
      <div class="task chrome">
        <div class="w">${weather}<div><span>29°C</span><span>Partly sunny</span></div></div>
        ${winLogo}
        <div class="pill"><svg width="16" height="16" viewBox="0 0 16 16"><circle cx="6.5" cy="6.5" r="5.5" fill="#5a5255" stroke="#e8e6e6" stroke-width="1.6"></circle><path d="M10.5 10.5l4 4" stroke="#e8e6e6" stroke-width="1.8"></path></svg><span>Search</span>${rainbow}</div>
        <div class="apps">
          <div class="app">${taskView}</div>
          <div class="app">${chat}</div>
          <div class="app">${folder}<div class="dot"></div></div>
          <div class="app">${telegram}</div>
          <div class="app">${chromeIcon}</div>
          <div class="app">${edge}<div class="dot"></div></div>
          <div class="app">${meet}</div>
          <div class="app"><div class="cur">${chromeIcon}</div><div class="badge">M</div><div class="dot wide"></div></div>
          <div class="app">${git}<div class="dot"></div></div>
        </div>
        <div class="tray">
          <svg class="t1" width="12" height="8" viewBox="0 0 12 8"><path d="M1 6.5l5-5 5 5" fill="none" stroke="#fff" stroke-width="1.5"></path></svg>
          <svg class="t2" width="16" height="16" viewBox="0 0 16 16"><path d="M1 7A7 7 0 0 1 14 4M14.5 .5V4.5h-4M1.5 15V10.5h4M1.5 11q2 4 5.5 4" fill="none" stroke="#fff" stroke-width="1.2"></path><circle cx="11.5" cy="12" r="4.2" fill="#f79b14"></circle></svg>
          <svg class="t3" width="15" height="12" viewBox="0 0 15 12"><path d="M.7 4.3a9.6 9.6 0 0 1 13.6 0" fill="none" stroke="#777" stroke-width="1.3"></path><path d="M2.8 6.7a6.6 6.6 0 0 1 9.4 0M4.8 8.9a3.8 3.8 0 0 1 5.4 0" fill="none" stroke="#fff" stroke-width="1.3"></path><circle cx="7.5" cy="11" r="1.4" fill="#fff"></circle></svg>
          <svg class="t4" width="16" height="14" viewBox="0 0 16 14"><path d="M1 5v4h2.5L7 12.5v-11L3.5 5zM9 4.5q1.5 2.5 0 5M11.3 2.7q3 4.3 0 8.6M13.5 1q3.8 6 0 12" fill="none" stroke="#fff" stroke-width="1.1"></path></svg>
          <svg class="t5" width="16" height="13" viewBox="0 0 16 13"><rect x="1.5" y="3.5" width="12" height="8" rx="1.5" fill="none" stroke="#fff" stroke-width="1.3"></rect><path d="M5.5 5.5h6.5v4H3.5z" fill="#fff"></path><path d="M15 6v3" stroke="#fff" stroke-width="1.3"></path><path d="M3 0L0 5h2.5L1.5 9 6 3.5H3.5z" fill="#fff" stroke="#35201f" stroke-width=".5"></path></svg>
          <div class="clock"><span>05:29 PM</span><span>17-03-2023</span></div>
          <svg class="bell" width="14" height="16" viewBox="0 0 14 16"><path d="M6 1.5q-4 .5-4 5V10L.5 12.5h12L11 10V5H8V1.5zM4.5 13.5h4q-.5 2-2 2t-2-2z" fill="#fff"></path><path d="M9.5 1h3.5L9.5 4.5H13" fill="none" stroke="#fff" stroke-width="1.1"></path><path d="M5 6.5h3.5L5.3 10h3.2" fill="none" stroke="#252122"></path></svg>
        </div>
      </div>
    `;
  }
}
